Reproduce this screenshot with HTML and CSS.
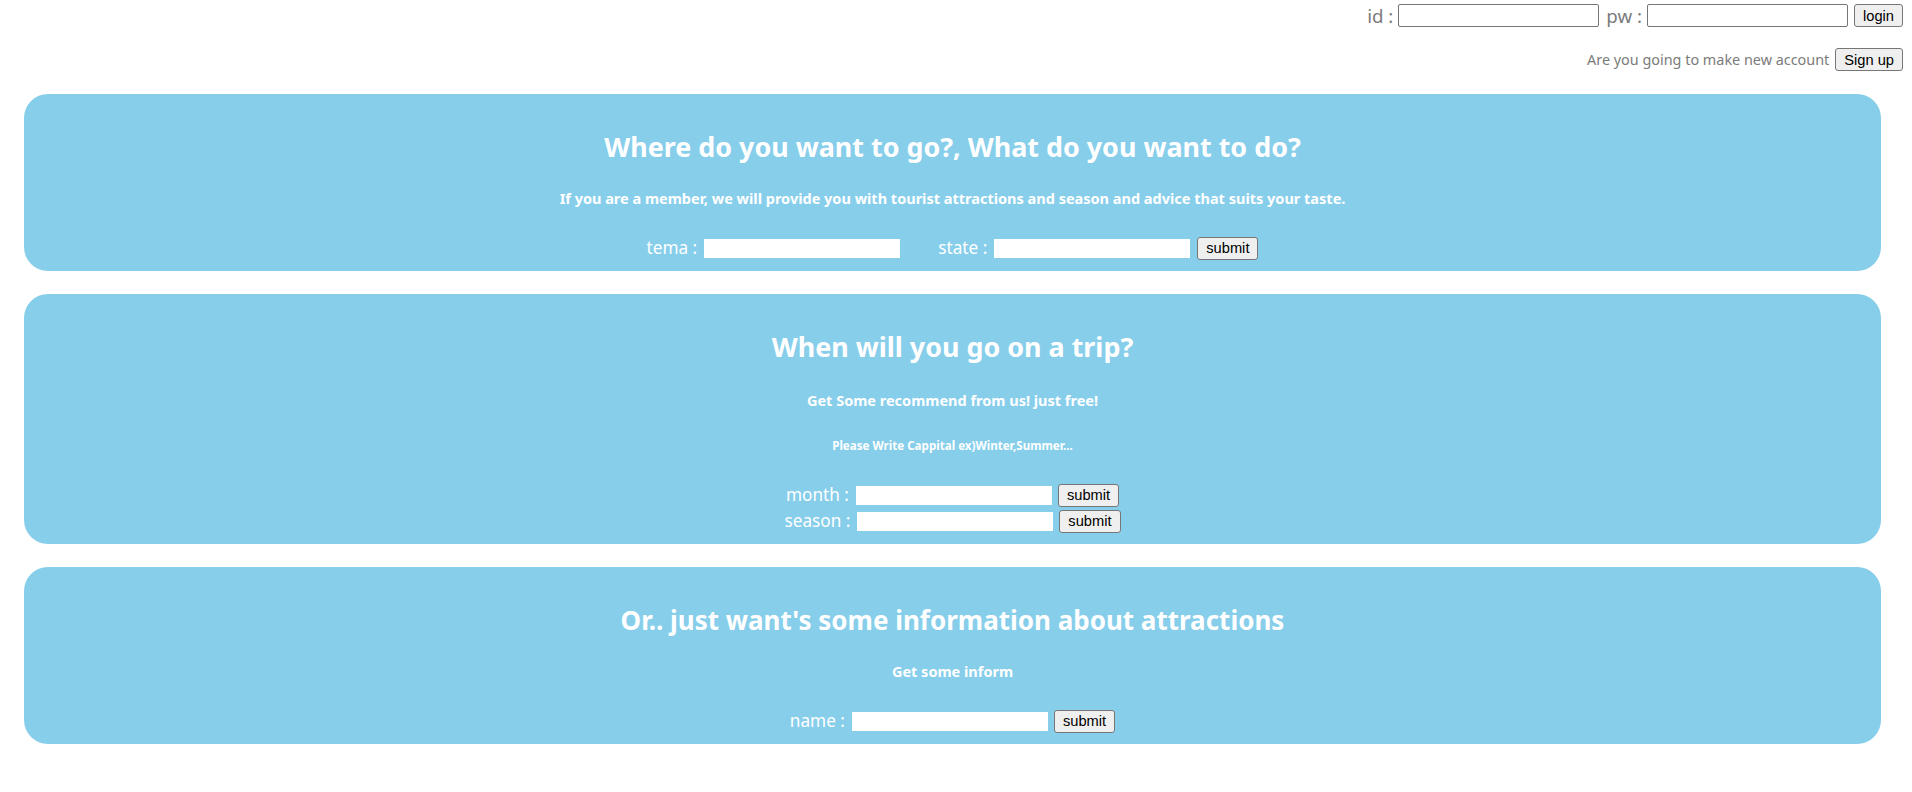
FILE: index.html
```html
<!DOCTYPE html>
<html lang="en">
<head>
<meta charset="utf-8">
<title>Trip</title>
<link rel="stylesheet" href="styles.css">
</head>
<body>
<header class="top">
  <form class="login-row">
    <label class="top-label" for="uid">id :</label>
    <input class="top-input" id="uid" type="text">
    <label class="top-label pw" for="upw">pw :</label>
    <input class="top-input" id="upw" type="password">
    <button class="btn login-btn" type="button">login</button>
  </form>
  <div class="signup-row">
    <span class="signup-text">Are you going to make new account</span>
    <button class="btn" type="button">Sign up</button>
  </div>
</header>

<section class="box">
  <h2 class="title">Where do you want to go?, What do you want to do?</h2>
  <h5 class="sub">If you are a member, we will provide you with tourist attractions and season and advice that suits your taste.</h5>
  <form class="row">
    <label class="lbl">tema :</label>
    <input class="field" type="text">
    <label class="lbl second">state :</label>
    <input class="field" type="text">
    <button class="btn" type="button">submit</button>
  </form>
</section>

<section class="box box-trip">
  <h2 class="title">When will you go on a trip?</h2>
  <h5 class="sub">Get Some recommend from us! just free!</h5>
  <h6 class="note">Please Write Cappital ex)Winter,Summer...</h6>
  <form class="row">
    <label class="lbl">month :</label>
    <input class="field" type="text">
    <button class="btn" type="button">submit</button>
  </form>
  <form class="row">
    <label class="lbl">season :</label>
    <input class="field" type="text">
    <button class="btn" type="button">submit</button>
  </form>
</section>

<section class="box">
  <h2 class="title title-long">Or.. just want's some information about attractions</h2>
  <h5 class="sub">Get some inform</h5>
  <form class="row">
    <label class="lbl">name :</label>
    <input class="field" type="text">
    <button class="btn" type="button">submit</button>
  </form>
</section>
</body>
</html>
```
FILE: styles.css
```css
html, body {
  background: #ffffff;
}
body {
  margin: 0 8px;
  font-family: "Noto Sans", "Open Sans", sans-serif;
}

/* ---------- buttons ---------- */
.btn {
  box-sizing: border-box;
  height: 23px;
  margin: 0;
  padding: 0 8px;
  font-family: "Liberation Sans", Arial, sans-serif;
  font-size: 14.67px;
  color: #000;
  background: #efefef;
  border: 1px solid #767676;
  border-radius: 3px;
}

/* ---------- top login area ---------- */
.top {
  padding-top: 4px;
  padding-right: 1px;
  display: flex;
  flex-direction: column;
  align-items: flex-end;
}
.login-row {
  margin: 0;
  display: flex;
  align-items: center;
  height: 23px;
}
.top-label {
  color: #7b7b7b;
  font-size: 18.7px;
  line-height: 23px;
  margin-right: 5px;
}
.top-label.pw {
  margin-left: 7px;
}
.top-input {
  box-sizing: border-box;
  width: 201px;
  height: 23px;
  margin: 0;
  padding: 1px 3px;
  border: 1px solid #767676;
  border-radius: 2px;
  background: #fff;
}
.login-row .login-btn {
  margin-left: 6px;
}
.signup-row {
  margin-top: 21px;
  display: flex;
  align-items: center;
  height: 23px;
}
.signup-text {
  color: #7b7b7b;
  font-size: 14.4px;
  margin-right: 6px;
}

/* ---------- blue boxes ---------- */
.box {
  box-sizing: border-box;
  width: calc(100% - 39px);
  margin: 23px 0 0 16px;
  padding: 35px 0 11px;
  background: #87ceeb;
  border-radius: 24px;
  color: #ffffff;
  display: flex;
  flex-direction: column;
  align-items: center;
  text-align: center;
}
.title {
  margin: 0;
  font-size: 26.9px;
  font-weight: 700;
  line-height: 36px;
}
.title.title-long {
  font-size: 26px;
}
.sub {
  margin: 23px 0 0;
  font-size: 14.5px;
  font-weight: 700;
  line-height: 20px;
}
.box-trip .sub {
  margin-top: 25px;
}
.note {
  margin: 28px 0 0;
  font-size: 11.6px;
  font-weight: 700;
  line-height: 16px;
}
.row {
  margin: 28px 0 0;
  height: 24px;
  display: flex;
  align-items: center;
  justify-content: center;
}
.note + .row {
  margin-top: 29px;
}
.row + .row {
  margin-top: 2px;
}
.lbl {
  font-size: 17.2px;
  line-height: 24px;
  color: #ffffff;
  margin-right: 7px;
}
.lbl.second {
  margin-left: 32px;
}
.field {
  box-sizing: border-box;
  width: 196px;
  height: 19px;
  margin: 0 6px 0 0;
  padding: 0 2px;
  border: none;
  background: #ffffff;
}
.row .lbl.second + .field {
  margin-right: 7px;
}
```
